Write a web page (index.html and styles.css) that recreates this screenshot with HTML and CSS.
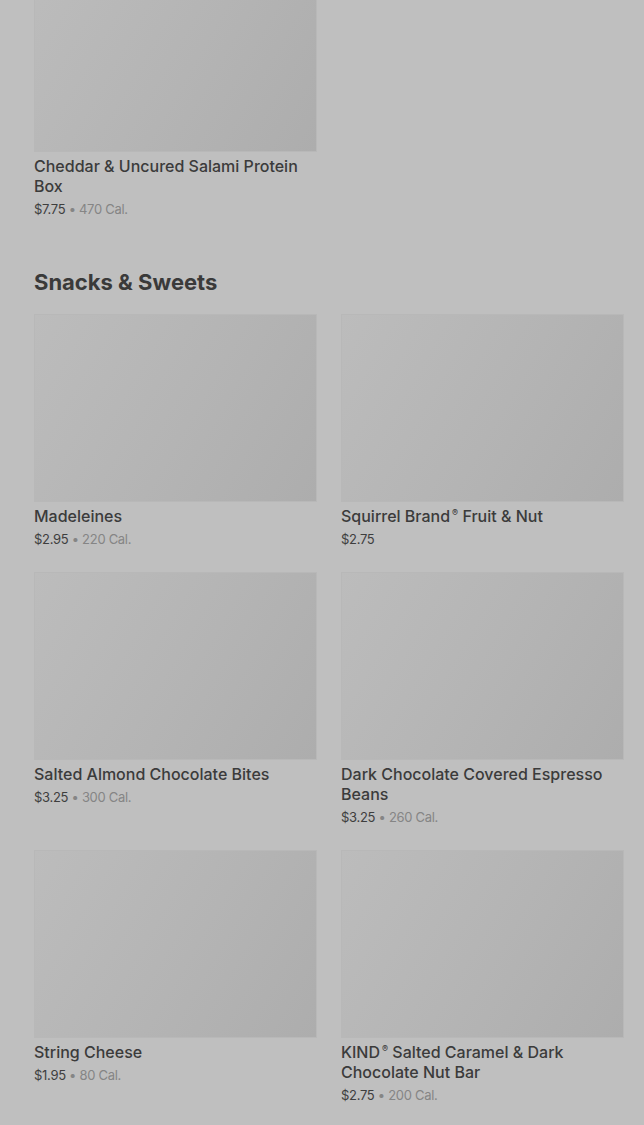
FILE: index.html
```html
<!DOCTYPE html>
<html lang="en">
<head>
<meta charset="utf-8">
<title>Menu</title>
<link rel="stylesheet" href="styles.css">
</head>
<body>
<main class="page">
  <section class="section section-first">
    <div class="grid">
      <div class="card">
        <div class="thumb"></div>
        <div class="name">Cheddar &amp; Uncured Salami Protein Box</div>
        <div class="meta"><span class="price">$7.75</span> <span class="cal">• 470 Cal.</span></div>
      </div>
    </div>
  </section>

  <section class="section">
    <h2 class="heading">Snacks &amp; Sweets</h2>
    <div class="grid">
      <div class="card">
        <div class="thumb"></div>
        <div class="name">Madeleines</div>
        <div class="meta"><span class="price">$2.95</span> <span class="cal">• 220 Cal.</span></div>
      </div>
      <div class="card">
        <div class="thumb"></div>
        <div class="name">Squirrel Brand<span class="reg">®</span> Fruit &amp; Nut</div>
        <div class="meta"><span class="price">$2.75</span></div>
      </div>
      <div class="card">
        <div class="thumb"></div>
        <div class="name">Salted Almond Chocolate Bites</div>
        <div class="meta"><span class="price">$3.25</span> <span class="cal">• 300 Cal.</span></div>
      </div>
      <div class="card">
        <div class="thumb"></div>
        <div class="name">Dark Chocolate Covered Espresso Beans</div>
        <div class="meta"><span class="price">$3.25</span> <span class="cal">• 260 Cal.</span></div>
      </div>
      <div class="card">
        <div class="thumb"></div>
        <div class="name">String Cheese</div>
        <div class="meta"><span class="price">$1.95</span> <span class="cal">• 80 Cal.</span></div>
      </div>
      <div class="card">
        <div class="thumb"></div>
        <div class="name">KIND<span class="reg">®</span> Salted Caramel &amp; Dark Chocolate Nut Bar</div>
        <div class="meta"><span class="price">$2.75</span> <span class="cal">• 200 Cal.</span></div>
      </div>
    </div>
  </section>
</main>
</body>
</html>
```

FILE: styles.css
```css
* { box-sizing: border-box; }
html, body {
  margin: 0;
  padding: 0;
  background: #bfbfbf;
}
body {
  font-family: Inter, Roboto, "Liberation Sans", sans-serif;
  color: #3b3b3b;
  overflow: hidden;
}
.page {
  padding: 0 20px 0 34px;
  margin-top: -36px;
}
.section-first {
  margin-bottom: 50px;
}
.heading {
  margin: 0 0 18px 0;
  font-size: 22px;
  line-height: 28px;
  font-weight: 700;
  letter-spacing: 0;
  color: #3a3a3a;
}
.grid {
  display: grid;
  grid-template-columns: 1fr 1fr;
  column-gap: 24px;
  row-gap: 24px;
}
.thumb {
  height: 188px;
  background: linear-gradient(120deg, #bcbcbc 0%, #b4b4b4 55%, #adadad 100%);
  border: 1px solid #b8b8b8;
}
.name {
  margin-top: 4px;
  font-size: 16px;
  line-height: 20px;
  font-weight: 500;
  color: #3b3b3b;
}
.reg {
  font-size: 9px;
  line-height: 0;
  vertical-align: super;
  margin-left: 2px;
}
.meta {
  margin-top: 4px;
  font-size: 13px;
  line-height: 18px;
  letter-spacing: -0.3px;
}
.price { color: #3e3e3e; }
.cal { color: #858585; }
```
